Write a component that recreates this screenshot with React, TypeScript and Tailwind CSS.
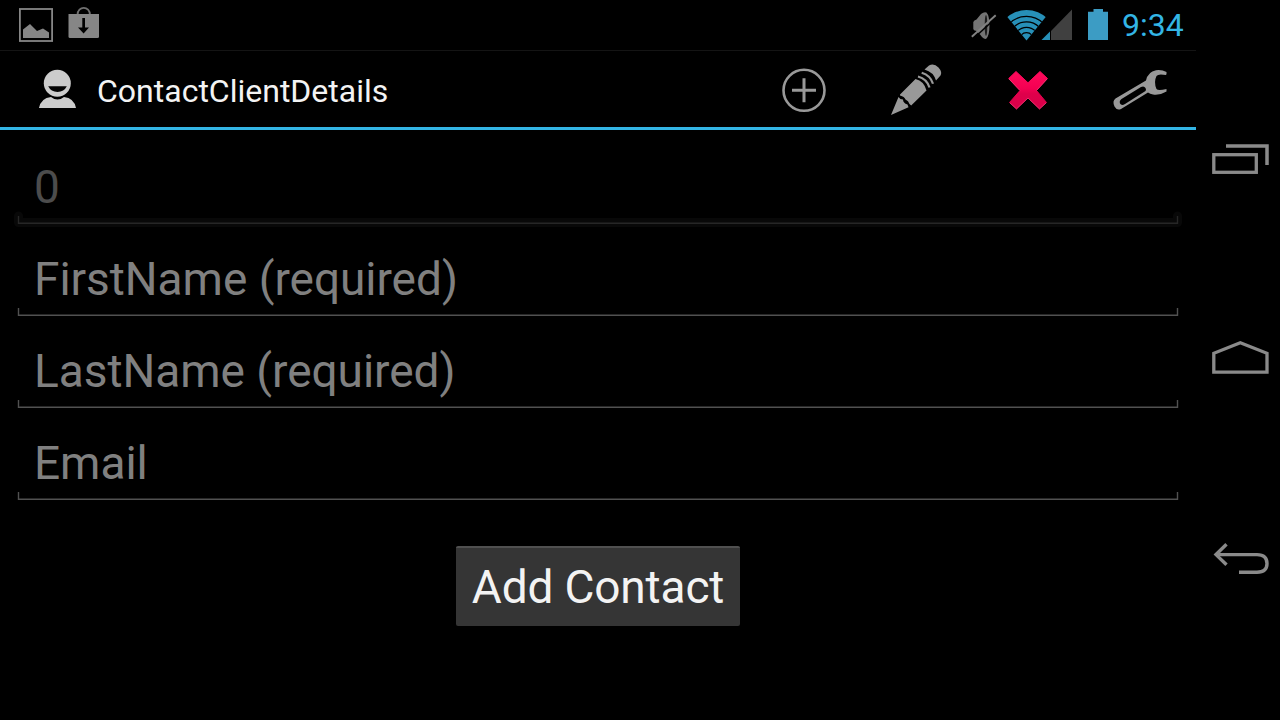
import type { ReactNode } from "react";

function Icon({ box, className, children }: { box: string; className: string; children: ReactNode }) {
  return (
    <svg viewBox={box} className={`block shrink-0 ${className}`} fill="none">
      {children}
    </svg>
  );
}

function StatusBar() {
  return (
    <div className="flex h-[51px] items-start justify-between border-b border-[#141414]">
      <div className="flex">
        <Icon box="0 0 120 50" className="h-[50px] w-[120px]">
          <rect x="19.9" y="9" width="32.2" height="32" stroke="#868686" strokeWidth="1.8" />
          <path d="M23 38V29.5L30 24L37 31L43 28.5L49 32.5V38Z" fill="#868686" />
          <path d="M77.5 15C77.5 5.500 90 5.500 90 15" stroke="#707070" strokeWidth="1.8" />
          <path d="M68.500 14H99V36.500Q99 38 97.500 38H70Q68.500 38 68.500 36.500Z" fill="#868686" />
          <path d="M82.300 18H85V27.500H89L83.600 33.500L78 27.500H82.300Z" fill="#000" />
        </Icon>
      </div>
      <div className="flex">
        <Icon box="960 0 162 50" className="h-[50px] w-[162px]">
          <path d="M973.300 22Q974 20 976.500 19.500L981 14Q984 11.500 986.500 12.500Q989.500 16 989.500 25Q989.500 36 986 39Q983 39 980.500 35L976.500 31Q973.300 30.500 973.300 29Z" fill="#747474" />
          <ellipse cx="986" cy="25.500" rx="1.300" ry="10.500" fill="#1c1c1c" />
          <path d="M973.500 38.500L997.500 16.500" stroke="#000" strokeWidth="1.500" />
          <path d="M971.800 36.700L995.700 15.200" stroke="#828282" strokeWidth="1.900" />
          <clipPath id="wifi"><path d="M1026.500 40.500L1004 13V5H1049V13Z" /></clipPath>
          <g clipPath="url(#wifi)">
            <circle cx="1026.500" cy="40" r="30" fill="#2790b8" />
            <circle cx="1026.500" cy="40" r="23.600" stroke="#000" strokeWidth="1.300" />
            <circle cx="1026.500" cy="40" r="18.100" stroke="#000" strokeWidth="1.300" />
            <circle cx="1026.500" cy="40" r="12.700" stroke="#000" strokeWidth="1.300" />
            <circle cx="1026.500" cy="40" r="7.300" stroke="#000" strokeWidth="1.300" />
          </g>
          <path d="M1051 31L1072 9.500V40H1051Z" fill="#404040" />
          <path d="M1041.500 40L1050 31.500V40Z" fill="#2790b8" />
          <path d="M1088 11.800H1093.500V9H1103V11.800H1108V40H1088Z" fill="#3c9cc4" />
        </Icon>
        <div className="w-[74px] font-[Roboto,sans-serif] text-[32px] leading-[51px] whitespace-nowrap text-[#33b5e5]">9:34</div>
      </div>
    </div>
  );
}

function ActionBar() {
  return (
    <header className="flex h-[79px] items-start border-b-[3px] border-[#33b5e5]">
      <Icon box="0 51 97 76" className="h-[76px] w-[97px]">
        <circle cx="57.300" cy="83.300" r="13.500" fill="#ccc" />
        <path d="M48.200 86.300H66.800Q64 92 57.500 92Q51 92 48.200 86.300Z" fill="#050505" />
        <path d="M39 108Q41 98 51 97Q57.500 102 64 97Q74 98 76 108Z" fill="#ccc" />
      </Icon>
      <h1 className="font-[Roboto,sans-serif] text-[32px] leading-[80px] whitespace-nowrap text-[#f3f3f3]">ContactClientDetails</h1>
      <nav className="ml-auto flex">
        <button aria-label="Add">
          <Icon box="748 51 112 76" className="h-[76px] w-[112px]">
            <circle cx="804" cy="90.300" r="20.500" stroke="#999" strokeWidth="2.600" />
            <path d="M804 78.300V102.300M792 90.300H816" stroke="#999" strokeWidth="3" />
          </Icon>
        </button>
        <button aria-label="Edit">
          <Icon box="860 51 112 76" className="h-[76px] w-[112px]">
            <path d="M891 115L898.500 97Q900 99.500 903 99.500Q903 103 907.500 104.500L908.500 107.300Z" fill="#999" />
            <path d="M900 94.500L915.500 79Q924 81 926.500 90.500L911.200 105.500L909.500 104Q908.500 100.500 905.500 99.500Q904.500 96.500 900 95.500Z" fill="#999" />
            <path d="M918 76.500Q927 79 929.500 87.500M921.700 72.800Q930.500 75.500 933 83.800" stroke="#999" strokeWidth="2.200" />
            <path d="M924.500 69.500L929 65.500Q934 63 938.500 67.500Q942.500 72 940.500 75.500L936 80.500Q933.500 72 924.500 69.500Z" fill="#999" />
          </Icon>
        </button>
        <button aria-label="Delete">
          <Icon box="972 51 112 76" className="h-[76px] w-[112px]">
            <defs>
              <linearGradient id="cross" x1="0" y1="71" x2="0" y2="109" gradientUnits="userSpaceOnUse">
                <stop offset="0" stopColor="#ff0b5c" />
                <stop offset="0.450" stopColor="#f40052" />
                <stop offset="0.600" stopColor="#df004b" />
                <stop offset="1" stopColor="#d90049" />
              </linearGradient>
            </defs>
            <path d="M1016 71.500L1028 82.800L1040 71.500L1047.500 78.500L1036.500 90.500L1046.500 102.500L1039.500 109L1028 98L1016.500 109L1009.500 102.500L1020 90.500L1008.700 78.500Z" fill="url(#cross)" stroke="url(#cross)" strokeWidth="1" strokeLinejoin="round" />
            <path d="M1009 79L1020 90.500M1047 79L1036.500 90.500M1010 103L1016.500 108.800L1028 98L1039.500 108.800L1046 103" stroke="#f25a8c" strokeOpacity="0.600" strokeWidth="0.900" />
          </Icon>
        </button>
        <button aria-label="Settings">
          <Icon box="1084 51 112 76" className="h-[76px] w-[112px]">
            <path d="M1166.500 74L1166 75Q1158 73.500 1156.500 76Q1153.500 82 1156.500 89Q1158 91 1166.500 89V91.500Q1160 95.500 1153 94.500Q1150 93.800 1148 92.500L1121 109Q1117 111 1114.500 106.500Q1112 101 1115.500 98.500L1146 80.500Q1148 71.500 1156 70.200Q1162 69.500 1166.500 72Z" fill="#999" />
            <path d="M1121.500 99L1141 87Q1144 85.500 1145.500 88Q1146.500 90 1145.500 91L1125 104Q1121.500 106 1120 103.500Q1119 100.800 1121.500 99Z" fill="#000" />
          </Icon>
        </button>
      </nav>
    </header>
  );
}

function Underline({ color, halo }: { color: string; halo?: boolean }) {
  return (
    <Icon box="0 0 1168 18" className="-mx-1 -mb-[5px] h-[18px] w-[1168px]">
      {halo && <path d="M4.500 5V11.500H1163.500V5" stroke="#080808" strokeWidth="9" strokeLinejoin="round" strokeLinecap="round" />}
      <path d="M4.500 5V12.300H1163.500V5" stroke={color} strokeWidth="1.400" />
    </Icon>
  );
}

function Field({ text, disabled }: { text: string; disabled?: boolean }) {
  return (
    <div className="flex h-[92px] flex-col justify-between">
      <div
        className={`pt-8 pl-4 font-[Roboto,sans-serif] text-[46px] leading-[46px] tracking-[-0.03px] whitespace-nowrap ${disabled ? "text-[#4c4c4c]" : "text-[#808080]"}`}
      >
        {text}
      </div>
      <Underline color={disabled ? "#262626" : "#515151"} halo={disabled} />
    </div>
  );
}

function NavigationBar() {
  return (
    <aside className="flex w-[84px] flex-col pt-[130px]">
      <Icon box="1196 130 84 60" className="mb-[140px] h-[60px] w-[84px]">
        <path d="M1226 146H1267V165" stroke="#8a8a8a" strokeWidth="3.500" />
        <rect x="1213.800" y="154.700" width="42.500" height="17.600" stroke="#8a8a8a" strokeWidth="3.300" />
      </Icon>
      <Icon box="1196 330 84 60" className="mb-[140px] h-[60px] w-[84px]">
        <path d="M1213.800 372.200V353.300L1240.300 342.800L1267 353.300V372.200Z" stroke="#8a8a8a" strokeWidth="3.300" />
      </Icon>
      <Icon box="1196 530 84 60" className="h-[60px] w-[84px]">
        <path d="M1226.500 544.300L1216 554.600L1226.500 564.800" stroke="#8a8a8a" strokeWidth="3.400" />
        <path d="M1217 554.600H1257Q1267 554.600 1267 563.500Q1267 572.200 1257 572.200H1239" stroke="#8a8a8a" strokeWidth="3.400" />
      </Icon>
    </aside>
  );
}

export default function App() {
  return (
    <div className="flex h-[720px] w-[1280px] overflow-hidden bg-black">
      <div className="flex w-[1196px] flex-col">
        <StatusBar />
        <ActionBar />
        <main className="flex flex-col px-[18px] pt-[2px]">
          <Field text="0" disabled />
          <Field text="FirstName (required)" />
          <Field text="LastName (required)" />
          <Field text="Email" />
          <button className="mt-[46px] h-20 w-[284px] self-center rounded-[2px] border-t-2 border-[#505050] bg-[#353535] font-[Roboto,sans-serif] text-[46px] leading-[78px] tracking-[-0.15px] whitespace-nowrap text-[#f3f3f3]">
            Add Contact
          </button>
        </main>
      </div>
      <NavigationBar />
    </div>
  );
}
